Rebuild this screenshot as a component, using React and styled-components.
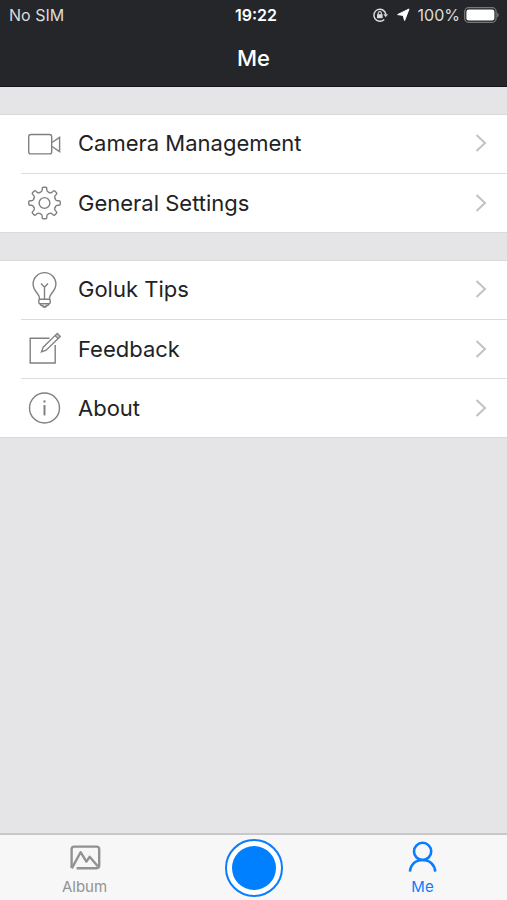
import React from "react";
import styled, { createGlobalStyle } from "styled-components";

const GlobalStyle = createGlobalStyle`
  *, *::before, *::after { box-sizing: border-box; }
  body {
    margin: 0;
    background: #e5e5e7;
    font-family: Inter, "Liberation Sans", sans-serif;
    color: #222224;
  }
`;

const Screen = styled.div`
  display: flex;
  flex-direction: column;
  min-height: 100vh;
`;

const Header = styled.header`
  background: #25262a;
  color: #fff;
  border-bottom: 1px solid #151518;
`;

const StatusBar = styled.div`
  display: grid;
  grid-template-columns: 1fr auto 1fr;
  align-items: center;
  height: 30px;
  padding: 0 8px 0 9px;
  font-size: 16px;
  line-height: 20px;
`;

const Carrier = styled.span`
  color: #dcdcdd;
`;

const Clock = styled.time`
  padding-left: 4px;
  font-weight: 600;
`;

const Indicators = styled.div`
  display: flex;
  align-items: center;
  justify-content: flex-end;
  color: #dcdcdd;
`;

const Level = styled.span`
  margin: 0 4px 0 8px;
`;

const Gap = styled.span`
  width: 8px;
`;

const Title = styled.h1`
  margin: 0;
  height: 56px;
  font-size: 22px;
  line-height: 56px;
  font-weight: 500;
  text-align: center;
`;

const Content = styled.main`
  flex: 1;
  display: flex;
  flex-direction: column;
  gap: 28px;
  padding: 27px 0;
`;

const Group = styled.nav`
  display: flex;
  flex-direction: column;
  background: #fff;
  box-shadow: inset 0 1px #dadadc, 0 1px #dadadc;
`;

const Row = styled.a`
  display: flex;
  align-items: center;
  height: 59px;
  margin-left: 21px;
  padding: 0 20px 1px 6px;
  color: inherit;
  text-decoration: none;

  & + & {
    border-top: 1px solid #dcdcde;
  }
`;

const RowLabel = styled.span`
  flex: 1;
  margin-left: 16px;
  font-size: 22px;
  line-height: 28px;
`;

const Line = styled.svg`
  display: block;
  flex: none;
  fill: none;
  stroke: currentColor;
  overflow: visible;
`;

const RowIcon = styled(Line)`
  color: #808083;
  stroke-width: 1.4;
`;

const Chevron = styled(Line)`
  color: #c2c2c6;
  stroke-width: 2;
`;

const TabBar = styled.nav`
  display: grid;
  grid-template-columns: repeat(3, 1fr);
  height: 67px;
  background: #f7f7f7;
  border-top: 2px solid #c8c8ca;
`;

const Tab = styled.a`
  display: flex;
  flex-direction: column;
  align-items: center;
  padding-top: 6px;
  color: ${(p) => (p.$active ? "#0a7dff" : "#929292")};
  font-size: 15px;
  line-height: 20px;
  text-decoration: none;
`;

const TabLabel = styled.span`
  margin-top: 2px;
`;

const RecordButton = styled.button`
  justify-self: center;
  width: 58px;
  height: 58px;
  margin-top: 4px;
  padding: 5px;
  border: 2px solid #0a7dff;
  border-radius: 50%;
  background: #fff;

  &::before {
    content: "";
    display: block;
    width: 100%;
    height: 100%;
    border-radius: 50%;
    background: #0080ff;
  }
`;

const CameraIcon = () => (
  <>
    <rect x="1.7" y="8.5" width="23" height="19.4" rx="2.2" />
    <path d="M25 16.5 L32.6 11.4 V25.6 L25 20.5" />
  </>
);

const TOOTH_ANGLES = [0, 45, 90, 135, 180, 225, 270, 315];

const GearIcon = () => (
  <>
    <circle cx="17.5" cy="18" r="5.4" />
    {TOOTH_ANGLES.map((angle) => (
      <path
        key={angle}
        transform={`rotate(${angle} 17.5 18) translate(0 0.5)`}
        strokeLinecap="round"
        d="M13.1 6.9 C14.8 6.4 15.2 6 15.2 4.6 V3 Q15.2 1.8 16.3 1.8 H18.7 Q19.8 1.8 19.8 3 V4.6 C19.8 6 20.2 6.4 21.9 6.9"
      />
    ))}
  </>
);

const BulbIcon = () => (
  <>
    <path d="M12.4 27.4 V25.6 C12.4 21.8 6.1 19.2 6.1 12 A11.4 11.4 0 0 1 28.9 12 C28.9 19.2 22.6 21.8 22.6 25.6 V27.4" />
    <path d="M14 11.5 L17.5 15.2 L21 11.5 M17.5 15.2 V27.4" />
    <rect x="11.8" y="27.2" width="11.4" height="4.6" rx="1.2" />
    <path d="M13.2 32 Q13.8 33.8 15.8 33.8 Q16 35 17.5 35 Q19 35 19.2 33.8 Q21.2 33.8 21.8 32" strokeWidth="1.8" />
  </>
);

const FeedbackIcon = () => (
  <>
    <path d="M22.5 7.2 H3.2 V32 H28.2 V14" />
    <path d="M14.4 20.9 L16.2 16.2 L30.3 2.4 L33.3 5.4 L19.1 19.1 Z M28 4.6 L31 7.6" strokeWidth="1.3" />
    <path d="M30.3 2.4 L33.3 5.4 L31 7.6 L28 4.6 Z" fill="currentColor" fillOpacity="0.5" stroke="none" />
  </>
);

const InfoIcon = () => (
  <>
    <circle cx="17.5" cy="18" r="15" />
    <path d="M17.5 15 V25.4" strokeWidth="2" />
    <path d="M17.5 10.4 V12.6" strokeWidth="2" />
  </>
);

const LockIcon = () => (
  <Line width="16" height="16" viewBox="0 0 16 16" strokeWidth="1.5" aria-hidden="true">
    <path d="M12.2 12.4 A6 6 0 1 1 13.8 7.2" />
    <path d="M11.4 7.3 H16 L13.7 10.3 Z" fill="currentColor" stroke="none" />
    <rect x="5" y="7.2" width="5.6" height="4" fill="currentColor" stroke="none" />
    <path d="M6.2 7.4 V6.2 A1.6 1.6 0 0 1 9.4 6.2 V7.4" strokeWidth="1.1" />
  </Line>
);

const LocationIcon = () => (
  <Line width="14" height="14" viewBox="0 0 14 14" aria-hidden="true">
    <path d="M13 1 L8.6 12.6 L7.2 7.4 L1.6 6.6 Z" fill="#fff" stroke="#fff" strokeLinejoin="round" />
  </Line>
);

const BatteryIcon = () => (
  <Line width="35" height="16" viewBox="0 0 35 16" role="img" aria-label="Battery full">
    <rect x="0.7" y="0.7" width="31.4" height="14.6" rx="4" stroke="#77777a" strokeWidth="1.3" />
    <rect x="2.4" y="2.4" width="28" height="11.2" rx="2.4" fill="#fff" stroke="none" />
    <path d="M33.2 5.4 Q34.8 6.2 34.8 8 Q34.8 9.8 33.2 10.6 Z" fill="#77777a" stroke="none" />
  </Line>
);

const groups = [
  {
    name: "Settings",
    rows: [
      { label: "Camera Management", Icon: CameraIcon },
      { label: "General Settings", Icon: GearIcon },
    ],
  },
  {
    name: "Help",
    rows: [
      { label: "Goluk Tips", Icon: BulbIcon },
      { label: "Feedback", Icon: FeedbackIcon },
      { label: "About", Icon: InfoIcon },
    ],
  },
];

export default function App() {
  return (
    <Screen>
      <GlobalStyle />
      <Header>
        <StatusBar>
          <Carrier>No SIM</Carrier>
          <Clock>19:22</Clock>
          <Indicators>
            <LockIcon />
            <Gap />
            <LocationIcon />
            <Level>100%</Level>
            <BatteryIcon />
          </Indicators>
        </StatusBar>
        <Title>Me</Title>
      </Header>

      <Content>
        {groups.map((group) => (
          <Group key={group.name} aria-label={group.name}>
            {group.rows.map(({ label, Icon }) => (
              <Row key={label} href="#">
                <RowIcon width="35" height="35" viewBox="0 0 35 35" aria-hidden="true">
                  <Icon />
                </RowIcon>
                <RowLabel>{label}</RowLabel>
                <Chevron width="12" height="20" viewBox="0 0 12 20" aria-hidden="true">
                  <path d="M1.5 2 L10 10 L1.5 18" />
                </Chevron>
              </Row>
            ))}
          </Group>
        ))}
      </Content>

      <TabBar aria-label="Main">
        <Tab href="#">
          <Line width="32" height="34" viewBox="0 0 32 34" strokeWidth="2.4" aria-hidden="true">
            <path d="M2.6 27 V8.2 Q2.6 5.6 5.2 5.6 H27.6 Q30.2 5.6 30.2 8.2 V24.6 Q30.2 27.2 27.6 27.2 H7.6" />
            <path d="M2.8 27.4 L11.6 11.2 L17.4 20.6 L20.6 15.8 L28.8 25.2" strokeLinejoin="round" />
          </Line>
          <TabLabel>Album</TabLabel>
        </Tab>
        <RecordButton type="button" aria-label="Record" />
        <Tab href="#" $active aria-current="page">
          <Line width="32" height="34" viewBox="0 0 32 34" strokeWidth="2.6" aria-hidden="true">
            <circle cx="15.6" cy="10.4" r="8.6" />
            <path d="M3 30.6 C3.4 23.6 8.4 19 15.6 19 S27.8 23.6 28.2 30.6" />
          </Line>
          <TabLabel>Me</TabLabel>
        </Tab>
      </TabBar>
    </Screen>
  );
}
